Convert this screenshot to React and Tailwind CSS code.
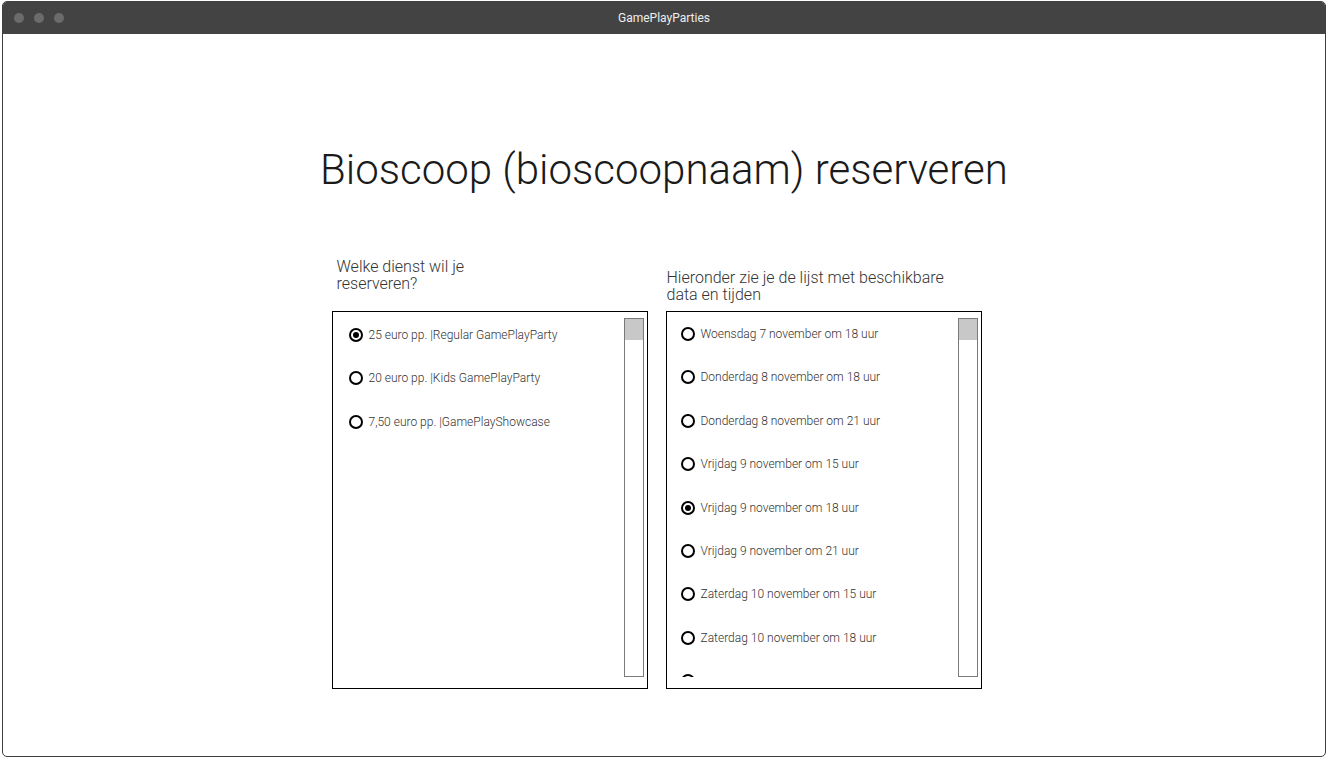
export default function App() {
  const services = [
    { label: "25 euro pp. |Regular GamePlayParty", checked: true },
    { label: "20 euro pp. |Kids GamePlayParty", checked: false },
    { label: "7,50 euro pp. |GamePlayShowcase", checked: false },
  ];

  const dates = [
    { label: "Woensdag 7 november om 18 uur", checked: false },
    { label: "Donderdag 8 november om 18 uur", checked: false },
    { label: "Donderdag 8 november om 21 uur", checked: false },
    { label: "Vrijdag 9 november om 15 uur", checked: false },
    { label: "Vrijdag 9 november om 18 uur", checked: true },
    { label: "Vrijdag 9 november om 21 uur", checked: false },
    { label: "Zaterdag 10 november om 15 uur", checked: false },
    { label: "Zaterdag 10 november om 18 uur", checked: false },
    // next one is scrolled out of view, only the top of its circle shows
    { label: "", checked: false },
  ];

  // radio row, drawn like the wireframe
  const Radio = ({ label, checked }) => (
    <div className="flex h-[14px] items-center">
      <span className="flex h-[14px] w-[14px] shrink-0 items-center justify-center rounded-full border-2 border-black">
        {checked && <span className="h-[6px] w-[6px] rounded-full bg-black" />}
      </span>
      {label && <span className="ml-[6px] whitespace-nowrap text-[12px] leading-none font-light text-[#333]">{label}</span>}
    </div>
  );

  const Scrollbar = () => (
    <div className="mr-[3px] w-[20px] shrink-0 border border-[#7a7a7a] bg-white">
      <div className="h-[21px] bg-[#c8c8c8]" />
    </div>
  );

  return (
    <div className="h-[759px] w-full bg-white pt-[1px] pr-[2px] pb-[2px] pl-[2px]" style={{ fontFamily: "Roboto, 'Liberation Sans', sans-serif" }}>
      <div className="flex h-full flex-col overflow-hidden rounded-[5px] border border-[#3f3f3f]">
        {/* title bar */}
        <div className="relative flex h-[32px] shrink-0 items-center bg-[#434343]">
          <div className="flex gap-[10px] pl-[11px]">
            <span className="h-[10px] w-[10px] rounded-full bg-[#6b6b6b]" />
            <span className="h-[10px] w-[10px] rounded-full bg-[#6b6b6b]" />
            <span className="h-[10px] w-[10px] rounded-full bg-[#6b6b6b]" />
          </div>
          <div className="absolute inset-0 flex items-center justify-center text-[12px] text-[#eeeeee]">GamePlayParties</div>
        </div>

        {/* page */}
        <div className="flex flex-1 flex-col items-center">
          <h1 className="mt-[112px] text-[42px] leading-[48px] font-light text-[#1a1a1a]">Bioscoop (bioscoopnaam) reserveren</h1>

          <div className="mt-[63px] flex gap-[18px] pr-[15px]">
            {/* services */}
            <div className="flex flex-col">
              <div className="h-[54px] pt-[1px] pl-[5px]">
                <p className="w-[170px] text-[16px] leading-[17px] font-light text-[#333]">Welke dienst wil je reserveren?</p>
              </div>
              <div className="flex h-[378px] w-[316px] border border-black pt-[6px] pb-[11px]">
                <div className="flex flex-1 flex-col gap-[29.4px] overflow-hidden pt-[10px] pl-[16px]">
                  {services.map((s) => (
                    <Radio key={s.label} {...s} />
                  ))}
                </div>
                <Scrollbar />
              </div>
            </div>

            {/* dates */}
            <div className="flex flex-col">
              <div className="h-[54px] pt-[12px] pl-[1px]">
                <p className="w-[310px] text-[16px] leading-[17px] font-light text-[#333]">Hieronder zie je de lijst met beschikbare data en tijden</p>
              </div>
              <div className="flex h-[378px] w-[316px] border border-black pt-[6px] pb-[11px]">
                <div className="flex flex-1 flex-col gap-[29.4px] overflow-hidden pt-[9px] pl-[14px]">
                  {dates.map((d, i) => (
                    <Radio key={i} {...d} />
                  ))}
                </div>
                <Scrollbar />
              </div>
            </div>
          </div>
        </div>
      </div>
    </div>
  );
}
